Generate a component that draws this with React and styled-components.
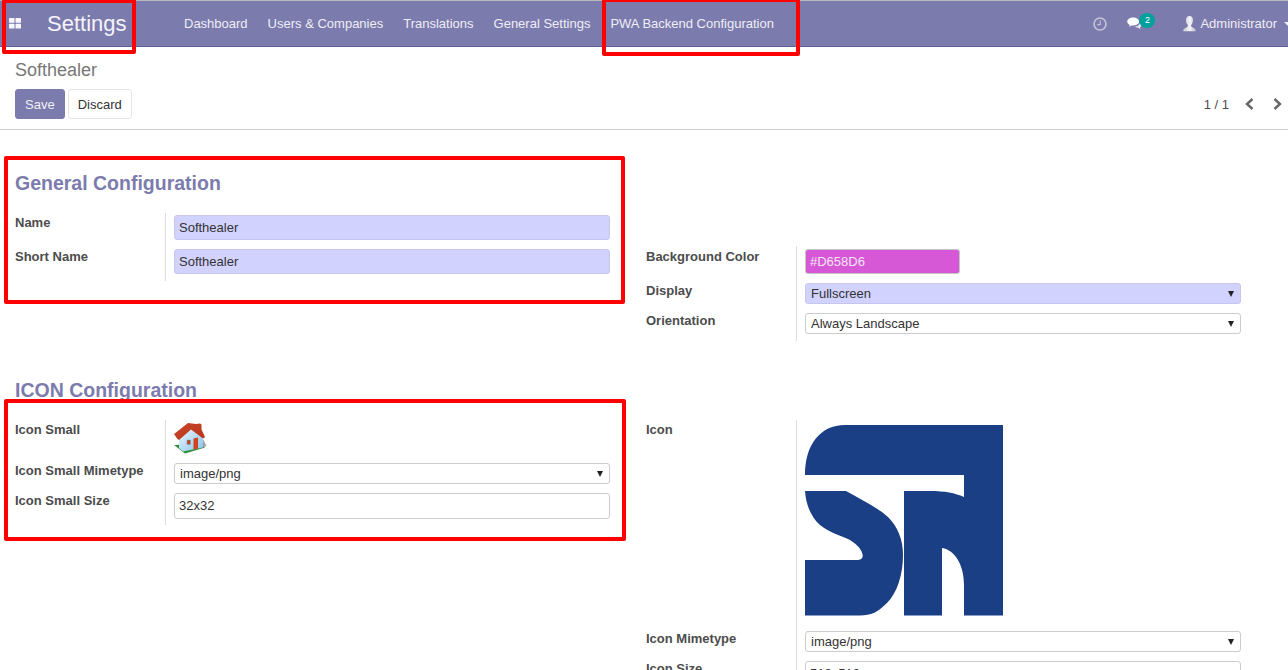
import React from "react";
import styled, { createGlobalStyle } from "styled-components";

const Global = createGlobalStyle`
  html, body { margin: 0; padding: 0; height: 670px; overflow: hidden; background: #fff; }
  body { font-family: "Liberation Sans", Arial, sans-serif; font-size: 13px; color: #4c4c4c; }
  * { box-sizing: border-box; }
`;

const Page = styled.div`
  position: relative;
  width: 1288px;
  height: 670px;
  overflow: hidden;
`;

const Nav = styled.header`
  display: flex;
  align-items: center;
  height: 47px;
  background: #7c7bad;
  border-top: 1px solid #b8b8b8;
  border-bottom: 1px solid #5f5e97;
  color: #fff;
`;

const AppsButton = styled.span`
  display: flex;
  width: 47px;
  padding-left: 9px;
`;

const Brand = styled.span`
  font-size: 22px;
  width: 127px;
  color: #f4f4fa;
`;

const MenuItem = styled.span`
  padding: 0 10px;
  font-size: 13px;
  color: #eeeef6;
  white-space: nowrap;
`;

const NavRight = styled.div`
  display: flex;
  align-items: center;
  margin-left: auto;
  margin-right: -4px;
`;

const ClockWrap = styled.span`
  display: flex;
  margin-right: 20px;
  opacity: 0.55;
`;

const ChatWrap = styled.span`
  position: relative;
  display: flex;
  width: 16px;
  margin-right: 40px;
`;

const Badge = styled.span`
  position: absolute;
  left: 12px;
  top: -4px;
  width: 16px;
  height: 15px;
  border-radius: 8px;
  background: #00a09d;
  color: #fff;
  font-size: 9px;
  line-height: 14px;
  text-align: center;
`;

const UserName = styled.span`
  margin-left: 4px;
  font-size: 13px;
  color: #eeeef6;
`;

const NavCaret = styled.span`
  margin-left: 7px;
  border-top: 4px solid #eeeef6;
  border-left: 4px solid transparent;
  border-right: 4px solid transparent;
`;

const ControlPanel = styled.section`
  height: 83px;
  padding: 13px 6px 0 15px;
  border-bottom: 1px solid #ccc;
`;

const Breadcrumb = styled.div`
  height: 29px;
  font-size: 18px;
  line-height: 21px;
  color: #777;
`;

const ActionRow = styled.div`
  display: flex;
  align-items: center;
`;

const Button = styled.button`
  height: 30px;
  margin-right: 3px;
  padding: 0 9px;
  border: 1px solid ${(p) => (p.$primary ? "#7c7bad" : "#e4e4e4")};
  border-radius: 3px;
  background: ${(p) => (p.$primary ? "#7c7bad" : "#fff")};
  color: ${(p) => (p.$primary ? "#f0f0f6" : "#333")};
  font: 13px "Liberation Sans", Arial, sans-serif;
`;

const Pager = styled.div`
  display: flex;
  align-items: center;
  margin-left: auto;
`;

const PagerText = styled.span`
  margin-right: 16px;
  color: #4c4c4c;
`;

const PagerArrow = styled.span`
  display: flex;
  margin-left: ${(p) => p.$gap || 0}px;
`;

const FormSection = styled.section`
  display: grid;
  grid-template-columns: 595px 595px;
  column-gap: 36px;
  padding-left: 15px;
  align-items: start;
`;

const Column = styled.div`
  padding-top: ${(p) => p.$top || 0}px;
`;

const Heading = styled.h2`
  margin: 0;
  height: ${(p) => p.$height}px;
  padding-top: ${(p) => p.$pad}px;
  font-size: 19.5px;
  line-height: 23px;
  font-weight: 700;
  color: #7c7bad;
`;

const Field = styled.div`
  display: grid;
  grid-template-columns: 150px 1fr;
  height: ${(p) => p.$height}px;
`;

const Label = styled.div`
  padding-top: ${(p) => p.$top ?? 2}px;
  font-weight: 700;
  line-height: 15px;
  color: #4c4c4c;
`;

const Value = styled.div`
  position: relative;
  padding: ${(p) => p.$top ?? 2}px 0 0 8px;
  border-left: 1px solid #ddd;
`;

const TextBox = styled.input`
  display: block;
  width: ${(p) => (p.$swatch ? "155px" : "100%")};
  height: ${(p) => p.$height || 25}px;
  padding: 0 4px ${(p) => (p.$height ? 2 : 0)}px;
  border: 1px solid ${(p) => (p.$required ? "#c6c6ef" : p.$swatch ? "#c6c6c6" : "#ccc")};
  border-radius: 3px;
  background: ${(p) => (p.$required ? "#d2d2ff" : p.$swatch ? "#d658d6" : "#fff")};
  color: ${(p) => (p.$swatch ? "#f6e4f6" : "#333")};
  font: 13px "Liberation Sans", Arial, sans-serif;
  outline: none;
`;

const SelectBox = styled.div`
  position: relative;
  height: 21px;
  padding-left: 5px;
  border: 1px solid ${(p) => (p.$required ? "#c6c6ef" : "#ccc")};
  border-radius: 3px;
  background: ${(p) => (p.$required ? "#d2d2ff" : "#fff")};
  color: #333;
  line-height: 20px;
`;

const SelectCaret = styled.span`
  position: absolute;
  right: 6px;
  top: 7px;
  border-top: 6px solid #222;
  border-left: 3px solid transparent;
  border-right: 3px solid transparent;
`;

const ImageValue = styled.div`
  display: flex;
`;

const Annotation = styled.div`
  position: absolute;
  left: ${(p) => p.$x}px;
  top: ${(p) => p.$y}px;
  width: ${(p) => p.$w}px;
  height: ${(p) => p.$h}px;
  border: 4px solid #f00;
  border-radius: 2px;
  pointer-events: none;
`;

const Select = ({ value, required }) => (
  <SelectBox $required={required}>
    {value}
    <SelectCaret />
  </SelectBox>
);

const AppsIcon = () => (
  <svg width="12" height="11" viewBox="0 0 12 11" fill="#f6f6fb">
    <rect x="0" y="0" width="5.5" height="4.8" rx="0.6" />
    <rect x="6.5" y="0" width="5.5" height="4.8" rx="0.6" />
    <rect x="0" y="5.8" width="5.5" height="4.8" rx="0.6" />
    <rect x="6.5" y="5.8" width="5.5" height="4.8" rx="0.6" />
  </svg>
);

const ClockIcon = () => (
  <svg width="14" height="14" viewBox="0 0 14 14" fill="none" stroke="#fff" strokeWidth="1.6">
    <circle cx="7" cy="7" r="6" />
    <path d="M7.2 3.5V7.6H4.2" strokeWidth="1.1" />
  </svg>
);

const ChatIcon = () => (
  <svg width="16" height="14" viewBox="0 0 16 14" fill="#fff">
    <path d="M6.2 0.5C2.9 0.5 0.2 2.3 0.2 4.6c0 1.4 1 2.6 2.5 3.3L2 9.8l2.6-1.4c.5.1 1 .1 1.6.1 3.4 0 6-1.8 6-3.9S9.6.5 6.2.5z" />
    <path d="M13 5.2c.2 2.6-2.6 4.4-5.6 4.4 1 .9 2.2 1.1 3.4 1l2.6 1.6-.5-2c1.4-.6 2.4-1.7 2.3-2.9-.1-.9-.8-1.6-2.2-2.1z" opacity="0.85" />
  </svg>
);

const UserIcon = () => (
  <svg width="13" height="16" viewBox="0 0 13 16">
    <defs>
      <linearGradient id="userFill" x1="0" y1="0" x2="1" y2="0">
        <stop offset="0" stopColor="#c9c9d6" />
        <stop offset="0.55" stopColor="#f4f4f8" />
        <stop offset="1" stopColor="#b9b9ca" />
      </linearGradient>
    </defs>
    <path
      fill="url(#userFill)"
      d="M6.5 0C4.2 0 3 1.7 3 4c0 2.2.8 4 1.8 4.9.2.8 0 1.6-.6 2.2C3 12 1 12.5.4 13.6c-.2.6-.2 1.2-.1 1.7h12.4c.1-.5.1-1.1-.1-1.7C12 12.5 10 12 8.8 11.1c-.6-.6-.8-1.4-.6-2.2C9.2 8 10 6.2 10 4c0-2.3-1.2-4-3.5-4z"
    />
  </svg>
);

const Chevron = ({ left }) => (
  <svg width="9" height="12" viewBox="0 0 9 12" fill="none" stroke="#666" strokeWidth="2.4">
    <path d={left ? "M7.5 1L2 6l5.5 5" : "M1.5 1L7 6l-5.5 5"} />
  </svg>
);

const HouseIcon = () => (
  <svg width="34" height="34" viewBox="0 0 34 34">
    <defs>
      <linearGradient id="houseWall" x1="0" y1="0" x2="1" y2="1">
        <stop offset="0" stopColor="#eef8fd" />
        <stop offset="1" stopColor="#86c2ea" />
      </linearGradient>
      <linearGradient id="houseRoof" x1="0" y1="0" x2="1" y2="1">
        <stop offset="0" stopColor="#c8482a" />
        <stop offset="1" stopColor="#b8341a" />
      </linearGradient>
    </defs>
    <path d="M0 24L11 32.500L31 26.500L24 23z" fill="#2f8f3a" />
    <path d="M29 18l3.500 7-3.500 1.500z" fill="#666" opacity="0.6" />
    <path d="M5 17L17 8l12 9v9.500L9 30.500 5 27z" fill="url(#houseWall)" />
    <path d="M0 13L14 2l8 1 4-.5 1.500 1v5L31 16l-2 1.500L17 8.500 5 19l-2-1.500z" fill="url(#houseRoof)" />
    <rect x="13" y="19" width="3.500" height="4.500" fill="#c8401f" stroke="#6fa8cc" strokeWidth="0.5" />
    <path d="M19.500 17.500l4.500-1v11l-4.500 1.200z" fill="#cf431c" />
  </svg>
);

const Logo = () => (
  <svg width="198" height="191" viewBox="0 0 198 191" fill="#1b3f85">
    <path d="M0 50C0 20 15 0 40 0H198V190.500H159V160C159 140 150 125 137 123V190.500H99V66H125C140 66 150 68 159 72V50Z" />
    <path d="M0 66H41C55 74 72 82 83 92C93 102 98 115 98 130C98 150 92 168 82 178C73 187 66 190.500 55 190.500H0V135H53C57 135 58 132 57.600 130C57 125 53 120 45 115C35 110 25 108 15 100C6 92 1 80 0 66Z" />
  </svg>
);

export default function App() {
  return (
    <Page>
      <Global />
      <Nav>
        <AppsButton>
          <AppsIcon />
        </AppsButton>
        <Brand>Settings</Brand>
        <MenuItem>Dashboard</MenuItem>
        <MenuItem>Users &amp; Companies</MenuItem>
        <MenuItem>Translations</MenuItem>
        <MenuItem>General Settings</MenuItem>
        <MenuItem>PWA Backend Configuration</MenuItem>
        <NavRight>
          <ClockWrap>
            <ClockIcon />
          </ClockWrap>
          <ChatWrap>
            <ChatIcon />
            <Badge>2</Badge>
          </ChatWrap>
          <UserIcon />
          <UserName>Administrator</UserName>
          <NavCaret />
        </NavRight>
      </Nav>

      <ControlPanel>
        <Breadcrumb>Softhealer</Breadcrumb>
        <ActionRow>
          <Button $primary>Save</Button>
          <Button>Discard</Button>
          <Pager>
            <PagerText>1 / 1</PagerText>
            <PagerArrow>
              <Chevron left />
            </PagerArrow>
            <PagerArrow $gap={19}>
              <Chevron />
            </PagerArrow>
          </Pager>
        </ActionRow>
      </ControlPanel>

      <FormSection>
        <Column>
          <Heading $height={83} $pad={42}>General Configuration</Heading>
          <Field $height={34}>
            <Label>Name</Label>
            <Value>
              <TextBox $required readOnly value="Softhealer" />
            </Value>
          </Field>
          <Field $height={34}>
            <Label>Short Name</Label>
            <Value>
              <TextBox $required readOnly value="Softhealer" />
            </Value>
          </Field>
        </Column>
        <Column $top={116}>
          <Field $height={34}>
            <Label $top={3}>Background Color</Label>
            <Value $top={3}>
              <TextBox $swatch readOnly value="#D658D6" />
            </Value>
          </Field>
          <Field $height={30}>
            <Label $top={3}>Display</Label>
            <Value $top={3}>
              <Select required value="Fullscreen" />
            </Value>
          </Field>
          <Field $height={31}>
            <Label $top={3}>Orientation</Label>
            <Value $top={3}>
              <Select value="Always Landscape" />
            </Value>
          </Field>
        </Column>
      </FormSection>

      <FormSection>
        <Column>
          <Heading $height={79} $pad={38}>ICON Configuration</Heading>
          <Field $height={40}>
            <Label>Icon Small</Label>
            <Value $top={1}>
              <ImageValue>
                <HouseIcon />
              </ImageValue>
            </Value>
          </Field>
          <Field $height={33}>
            <Label $top={3}>Icon Small Mimetype</Label>
            <Value $top={3}>
              <Select value="image/png" />
            </Value>
          </Field>
          <Field $height={32}>
            <Label $top={0}>Icon Small Size</Label>
            <Value $top={0}>
              <TextBox $height={26} readOnly value="32x32" />
            </Value>
          </Field>
        </Column>
        <Column $top={79}>
          <Field $height={208}>
            <Label>Icon</Label>
            <Value $top={5}>
              <ImageValue>
                <Logo />
              </ImageValue>
            </Value>
          </Field>
          <Field $height={30}>
            <Label $top={3}>Icon Mimetype</Label>
            <Value $top={3}>
              <Select value="image/png" />
            </Value>
          </Field>
          <Field $height={32}>
            <Label $top={3}>Icon Size</Label>
            <Value $top={3}>
              <TextBox $height={26} readOnly value="512x512" />
            </Value>
          </Field>
        </Column>
      </FormSection>

      <Annotation $x={2} $y={-1} $w={134} $h={55} />
      <Annotation $x={602} $y={-2} $w={198} $h={58} />
      <Annotation $x={4} $y={156} $w={621} $h={148} />
      <Annotation $x={4} $y={399} $w={622} $h={142} />
    </Page>
  );
}
